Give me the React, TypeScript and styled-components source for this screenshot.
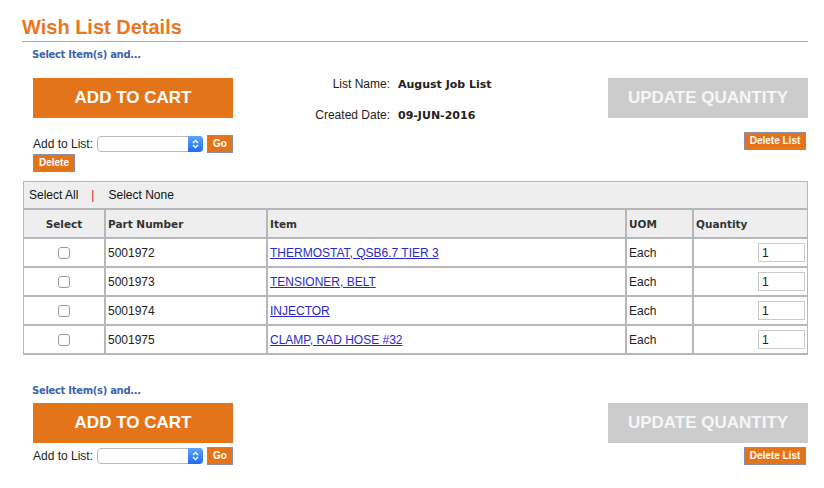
import React from "react";
import styled, { createGlobalStyle } from "styled-components";

const Global = createGlobalStyle`
  html, body { margin: 0; padding: 0; background: #fff; }
  body { font-family: "Liberation Sans", Arial, sans-serif; color: #222; }
`;

const ORANGE = "#e4741a";

const Page = styled.div`
  width: 786px;
  padding: 0 0 0 22px;
`;

const Title = styled.h1`
  margin: 0;
  padding: 15px 0 2px;
  font-family: "Liberation Sans", Arial, sans-serif;
  font-weight: bold;
  font-size: 20px;
  line-height: 24px;
  color: #e87722;
  border-bottom: 1px solid #aaa;
`;

const Hint = styled.div<{ $top: number }>`
  margin-top: ${(p) => p.$top}px;
  padding-left: 10px;
  font-family: "DejaVu Sans", Verdana, sans-serif;
  font-size: 10px;
  font-weight: bold;
  letter-spacing: -0.3px;
  line-height: 12px;
  color: #3d64a6;
`;

const ActionBar = styled.div<{ $top: number }>`
  display: flex;
  justify-content: space-between;
  align-items: flex-start;
  margin-top: ${(p) => p.$top}px;
  padding-left: 11px;
`;

const LeftCol = styled.div`
  display: flex;
  flex-direction: column;
  flex-shrink: 0;
  width: 200px;
`;

const BigButton = styled.button<{ $disabled?: boolean }>`
  display: block;
  width: 200px;
  height: 40px;
  border: 0;
  padding: 0;
  background: ${(p) => (p.$disabled ? "#cccccc" : ORANGE)};
  color: ${(p) => (p.$disabled ? "#f6f6f6" : "#fff")};
  font-family: "Liberation Sans", Arial, sans-serif;
  font-weight: bold;
  font-size: 17px;
  cursor: pointer;
`;

const ListRow = styled.div<{ $top: number }>`
  display: flex;
  align-items: center;
  margin-top: ${(p) => p.$top}px;
  height: 18px;
  white-space: nowrap;
`;

const Label = styled.span`
  flex-shrink: 0;
  font-size: 12px;
  color: #222;
  margin-right: 4px;
`;

const SelectWrap = styled.div`
  position: relative;
  flex-shrink: 0;
  width: 106px;
  height: 16px;
  margin-right: 4px;
`;

const SelectBox = styled.select`
  appearance: none;
  -webkit-appearance: none;
  display: block;
  width: 106px;
  height: 16px;
  border: 1px solid #b9b9b9;
  border-radius: 4px;
  background: #fff;
  box-sizing: border-box;
  padding: 0;
  margin: 0;
  font-size: 11px;
`;

const SelectArrow = styled.span`
  position: absolute;
  right: 0;
  top: 0;
  width: 15px;
  height: 16px;
  border-radius: 0 4px 4px 0;
  background: linear-gradient(#5ea2ff, #1d6ff2);
  display: flex;
  align-items: center;
  justify-content: center;
  pointer-events: none;
`;

const SmallButton = styled.button<{ $w?: number }>`
  display: block;
  flex-shrink: 0;
  height: 18px;
  ${(p) => (p.$w ? `width: ${p.$w}px;` : "")}
  padding: 0;
  border: 1px solid #8a8fa8;
  background: ${ORANGE};
  color: #fff;
  font-family: "Liberation Sans", Arial, sans-serif;
  font-weight: bold;
  font-size: 10px;
  line-height: 16px;
  cursor: pointer;
  box-sizing: border-box;
`;

const DeleteRow = styled.div`
  display: flex;
  margin-top: 1px;
`;

const Info = styled.div`
  flex: 1;
  display: grid;
  grid-template-columns: 157px auto;
  column-gap: 8px;
  row-gap: 16px;
  margin-top: -1px;
  font-size: 12px;
  line-height: 15px;
  white-space: nowrap;
`;

const InfoLabel = styled.span`
  text-align: right;
  color: #222;
`;

const InfoValue = styled.span`
  font-family: "DejaVu Sans", Verdana, sans-serif;
  font-weight: bold;
  font-size: 11px;
  color: #222;
`;

const RightCol = styled.div`
  display: flex;
  flex-direction: column;
  align-items: flex-end;
  flex-shrink: 0;
  width: 200px;
`;

const DeleteListWrap = styled.div<{ $top: number }>`
  display: flex;
  margin-top: ${(p) => p.$top}px;
  margin-right: 2px;
`;

const TableWrap = styled.div`
  margin-top: 9px;
  margin-left: 1px;
  width: 783px;
  border: 1px solid #b6b6bb;
  border-bottom: 0;
`;

const SelectBar = styled.div`
  height: 26px;
  display: flex;
  align-items: center;
  background: #eeeeee;
  padding-left: 5px;
  font-size: 12px;
  color: #111;
  border-bottom: 1px solid #b6b6bb;
`;

const Sep = styled.span`
  color: #c8202a;
  margin: 0 14px 0 13px;
`;

const Table = styled.table`
  width: 100%;
  border-collapse: collapse;
  font-size: 12px;
  table-layout: fixed;
`;

const Th = styled.th<{ $center?: boolean; $w?: number }>`
  height: 27px;
  background: #eeeeee;
  border: 2px solid #b6b6bb;
  border-top: 1px solid #b6b6bb;
  text-align: ${(p) => (p.$center ? "center" : "left")};
  padding: 0 2px;
  font-family: "DejaVu Sans", Verdana, sans-serif;
  font-size: 10.5px;
  font-weight: bold;
  color: #333;
  ${(p) => (p.$w ? `width: ${p.$w}px;` : "")}
  &:first-child { border-left: 0; }
  &:last-child { border-right: 0; }
`;

const Td = styled.td<{ $center?: boolean; $right?: boolean }>`
  height: 27px;
  border: 2px solid #b6b6bb;
  padding: 0 2px;
  text-align: ${(p) => (p.$center ? "center" : p.$right ? "right" : "left")};
  color: #222;
  &:first-child { border-left: 0; }
  &:last-child { border-right: 0; padding-right: 2px; }
`;

const Check = styled.input`
  appearance: none;
  -webkit-appearance: none;
  width: 12px;
  height: 12px;
  margin: 0;
  border: 1px solid #9c9c9c;
  border-radius: 3px;
  background: #fff;
  vertical-align: middle;
`;

const ItemLink = styled.a`
  color: #2a2acb;
  text-decoration: underline;
`;

const QtyInput = styled.input`
  width: 47px;
  height: 19px;
  box-sizing: border-box;
  border: 1px solid #c9c9c9;
  padding: 0 3px;
  font-family: "Liberation Sans", Arial, sans-serif;
  font-size: 12px;
  color: #222;
  vertical-align: middle;
`;

const rows = [
  { part: "5001972", item: "THERMOSTAT, QSB6.7 TIER 3" },
  { part: "5001973", item: "TENSIONER, BELT" },
  { part: "5001974", item: "INJECTOR" },
  { part: "5001975", item: "CLAMP, RAD HOSE #32" },
];

const Arrow = () => (
  <SelectArrow>
    <svg width="7" height="10" viewBox="0 0 7 10">
      <path d="M1 4 L3.5 1.5 L6 4 M1 6 L3.5 8.5 L6 6" stroke="#fff" strokeWidth="1.3" fill="none" />
    </svg>
  </SelectArrow>
);

const AddToList = ({ top }: { top: number }) => (
  <ListRow $top={top}>
    <Label>Add to List:</Label>
    <SelectWrap>
      <SelectBox defaultValue="">
        <option value=""></option>
      </SelectBox>
      <Arrow />
    </SelectWrap>
    <SmallButton $w={26}>Go</SmallButton>
  </ListRow>
);

export default function App() {
  return (
    <Page>
      <Global />
      <Title>Wish List Details</Title>
      <Hint $top={7}>Select Item(s) and...</Hint>
      <ActionBar $top={17}>
        <LeftCol>
          <BigButton>ADD TO CART</BigButton>
          <AddToList top={17} />
          <DeleteRow>
            <SmallButton $w={42}>Delete</SmallButton>
          </DeleteRow>
        </LeftCol>
        <Info>
          <InfoLabel>List Name:</InfoLabel>
          <InfoValue>August Job List</InfoValue>
          <InfoLabel>Created Date:</InfoLabel>
          <InfoValue>09-JUN-2016</InfoValue>
        </Info>
        <RightCol>
          <BigButton $disabled>UPDATE QUANTITY</BigButton>
          <DeleteListWrap $top={14}>
            <SmallButton $w={62}>Delete List</SmallButton>
          </DeleteListWrap>
        </RightCol>
      </ActionBar>
      <TableWrap>
        <SelectBar>
          <span>Select All</span>
          <Sep>|</Sep>
          <span>Select None</span>
        </SelectBar>
        <Table>
          <thead>
            <tr>
              <Th $center $w={76}>Select</Th>
              <Th $w={156}>Part Number</Th>
              <Th $w={353}>Item</Th>
              <Th $w={61}>UOM</Th>
              <Th>Quantity</Th>
            </tr>
          </thead>
          <tbody>
            {rows.map((r) => (
              <tr key={r.part}>
                <Td $center>
                  <Check type="checkbox" />
                </Td>
                <Td>{r.part}</Td>
                <Td>
                  <ItemLink href="#">{r.item}</ItemLink>
                </Td>
                <Td>Each</Td>
                <Td $right>
                  <QtyInput defaultValue="1" />
                </Td>
              </tr>
            ))}
          </tbody>
        </Table>
      </TableWrap>
      <Hint $top={30}>Select Item(s) and...</Hint>
      <ActionBar $top={6}>
        <LeftCol>
          <BigButton>ADD TO CART</BigButton>
          <AddToList top={4} />
        </LeftCol>
        <RightCol>
          <BigButton $disabled>UPDATE QUANTITY</BigButton>
          <DeleteListWrap $top={4}>
            <SmallButton $w={62}>Delete List</SmallButton>
          </DeleteListWrap>
        </RightCol>
      </ActionBar>
    </Page>
  );
}
